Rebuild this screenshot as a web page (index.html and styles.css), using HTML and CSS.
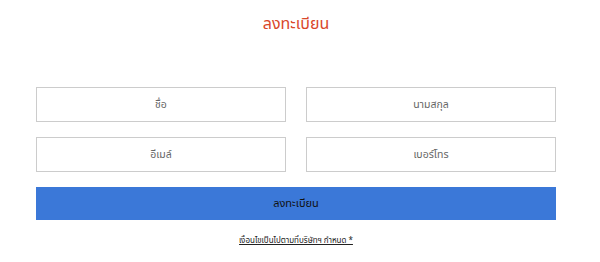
FILE: index.html
```html
<!DOCTYPE html>
<html lang="th">
<head>
  <meta charset="UTF-8" />
  <title>ลงทะเบียน</title>
  <link rel="stylesheet" href="styles.css">
</head>
<body>
  <div class="form-wrap">
    <h1 class="title">ลงทะเบียน</h1>

    <form class="register-form">
      <div class="row">
        <input type="text" placeholder="ชื่อ" />
        <input type="text" placeholder="นามสกุล" />
      </div>
      <div class="row">
        <input type="email" placeholder="อีเมล์" />
        <input type="tel" placeholder="เบอร์โทร" />
      </div>
      <button type="button" class="submit-btn">ลงทะเบียน</button>
    </form>

    <a href="#" class="terms">เงื่อนไขเป็นไปตามที่บริษัทฯ กำหนด *</a>
  </div>
</body>
</html>
```

FILE: styles.css
```css
  html, body {
    margin: 0;
    padding: 0;
    background: #fff;
    font-family: 'Noto Sans Thai', 'Noto Sans Thai UI', 'Noto Sans', sans-serif;
  }

  .form-wrap {
    width: 520px;
    margin-left: 36px;
    padding-top: 12px;
    text-align: center;
  }

  .title {
    margin: 0;
    font-size: 16px;
    font-weight: 400;
    line-height: 24px;
    color: #d9472b;
  }

  .register-form {
    margin-top: 51px;
    display: flex;
    flex-direction: column;
    gap: 15px;
  }

  .row {
    display: flex;
    gap: 20px;
  }

  .row input {
    flex: 1;
    min-width: 0;
    height: 35px;
    box-sizing: border-box;
    border: 1px solid #ccc;
    padding: 0 10px;
    font-family: inherit;
    font-size: 10.5px;
    text-align: center;
    color: #333;
    outline: none;
  }

  .row input::placeholder {
    color: #666;
  }

  .submit-btn {
    height: 33px;
    border: none;
    background-color: #3b78d8;
    color: #111;
    font-family: inherit;
    font-size: 11px;
    cursor: pointer;
  }

  .terms {
    display: inline-block;
    margin-top: 15px;
    font-size: 8px;
    color: #222;
  }
```
